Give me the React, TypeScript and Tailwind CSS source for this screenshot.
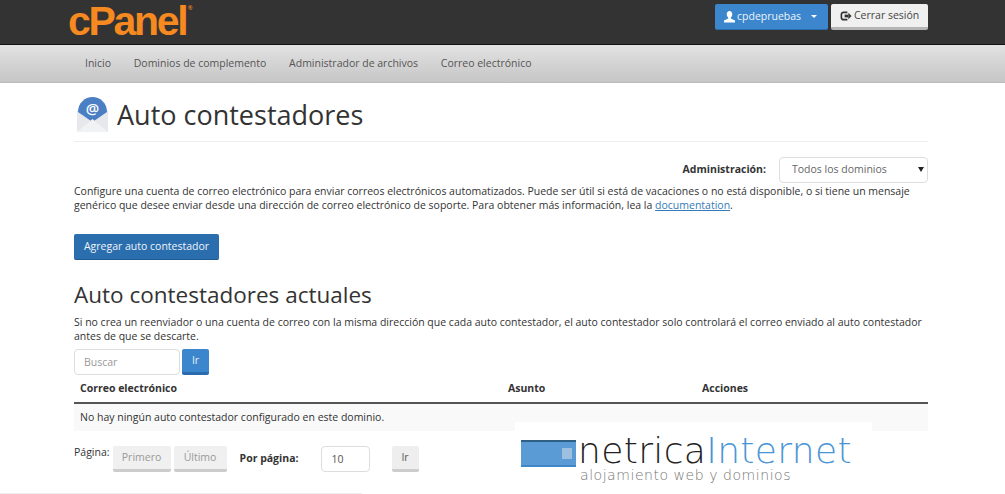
import React from 'react';

const btnGray = 'h-[26px] pt-[1px] flex items-center justify-center text-[10.5px] text-[#999] bg-[#f0f0f0] border-b-[3px] border-[#ccc] rounded-[2px]';

const MailIcon = () => (
  <svg width="31" height="36" viewBox="0 0 31 36" className="shrink-0">
    <path d="M0 13 L15.5 24 L31 13 V35 H0 Z" fill="#e6e8eb" />
    <path d="M1 15 C1 6 8 0 15.5 0 C23 0 30 6 30 15 L15.5 25 Z" fill="#4a7fc4" />
    <path d="M0 35 L15.5 22 L31 35 Z" fill="#f1f2f4" />
    <text x="15.5" y="17" textAnchor="middle" fontSize="15" fontWeight="600" fill="#fff" fontFamily="'Open Sans', sans-serif">@</text>
  </svg>
);

export default function App() {
  return (
    <div className="relative h-[494px] w-[1005px] overflow-hidden bg-white font-['Open_Sans',sans-serif] text-[#333]">
      {/* barra superior */}
      <header className="h-[45px] bg-[#333] border-b border-[#111] flex justify-between pl-[68px] pr-[77px]">
        <div className="relative h-[44px] font-['Liberation_Sans',sans-serif] font-bold text-[41px] leading-[42px] tracking-[-2.3px] text-[#f6891f]">
          cPanel
          <span className="absolute right-[-6px] top-[4px] text-[6px] leading-[8px] tracking-normal">®</span>
        </div>
        <div className="flex gap-[3px] pt-[4px]">
          <div className="w-[113px] h-[26px] bg-[#3b86cc] border-b-[1px] border-[#2a6cad] rounded-[2px] flex items-center pl-[9px] text-[10.5px] text-[#eef4fa]">
            <svg width="11" height="12" viewBox="0 0 11 12" fill="#fff" className="mr-[2px]">
              <path d="M5.5 0C7.2 0 8.3 1.3 8.3 3.2 8.3 4.8 7.4 6 6.8 6.6V7.5L11 9.6V11.5H0V9.6L4.2 7.5V6.6C3.6 6 2.7 4.8 2.7 3.2 2.7 1.3 3.8 0 5.5 0Z" />
            </svg>
            cpdepruebas
            <span className="ml-[10px] w-0 h-0 border-x-[3px] border-x-transparent border-t-[3px] border-t-white" />
          </div>
          <div className="w-[97px] h-[26px] pt-[1px] bg-[#f0f0f0] border-b-[3px] border-[#b5b5b5] rounded-[2px] flex items-center pl-[9px] text-[10.5px] text-[#444]">
            <svg width="12" height="12" viewBox="0 0 13 12" className="mr-[2px]" fill="none" stroke="#333" strokeWidth="1.8">
              <path d="M8 2H4C2.5 2 1.5 3 1.5 4.5V7.5C1.5 9 2.5 10 4 10H8" />
              <path d="M5 6H9" strokeWidth="3" />
              <path d="M9 2.5L12.5 6L9 9.5Z" fill="#333" stroke="none" />
            </svg>
            Cerrar sesión
          </div>
        </div>
      </header>

      {/* navegacion */}
      <nav className="h-[38px] bg-gradient-to-b from-[#e2e2e2] to-[#c6c6c6] border-b border-[#bbb] pl-[85px] flex items-center gap-[22.7px] text-[10.5px] text-[#555]">
        <span>Inicio</span>
        <span>Dominios de complemento</span>
        <span>Administrador de archivos</span>
        <span>Correo electrónico</span>
      </nav>

      <main className="ml-[74px] w-[854px]">
        <div className="h-[59px] border-b border-[#eee] flex items-center pl-[3px] gap-[9px] pt-[5px]">
          <MailIcon />
          <h1 className="text-[27px] leading-[36px] text-[#333]">Auto contestadores</h1>
        </div>

        <div className="flex justify-end items-center mt-[15px] h-[26px]">
          <span className="text-[10.5px] font-bold mr-[13px]">Administración:</span>
          <div className="relative w-[149px] h-[26px] border border-[#ddd] rounded-[4px] pl-[12px] flex items-center text-[10.5px] text-[#666]">
            Todos los dominios
            <span className="absolute right-[3px] top-[9px] w-0 h-0 border-x-[3px] border-x-transparent border-t-[5px] border-t-[#222]" />
          </div>
        </div>

        <p className="mt-[1px] text-[10.5px] leading-[14px] text-[#333]">
          Configure una cuenta de correo electrónico para enviar correos electrónicos automatizados. Puede ser útil si está de vacaciones o no está disponible, o si tiene un mensaje genérico que desee enviar desde una dirección de correo electrónico de soporte. Para obtener más información, lea la <span className="text-[#337ab7] underline">documentation</span>.
        </p>

        <button className="mt-[22px] w-[145px] h-[26px] bg-[#2a6ead] border-b border-[#20578c] rounded-[2px] text-[10.5px] text-[#eef4fa] block">
          Agregar auto contestador
        </button>

        <h2 className="mt-[20px] text-[22.5px] leading-[30px] text-[#333]">Auto contestadores actuales</h2>

        <p className="mt-[5px] text-[10.5px] leading-[14px] w-[850px]">
          Si no crea un reenviador o una cuenta de correo con la misma dirección que cada auto contestador, el auto contestador solo controlará el correo enviado al auto contestador antes de que se descarte.
        </p>

        <div className="mt-[6px] flex gap-[2px]">
          <div className="w-[106px] h-[26px] pt-[1px] border border-[#ddd] rounded-[4px] pl-[9px] flex items-center text-[10.5px] text-[#999]">Buscar</div>
          <div className="w-[27px] h-[26px] pt-[1px] bg-[#3b86cc] border-b-[3px] border-[#2a6cad] rounded-[2px] flex items-center justify-center text-[10.5px] text-[#e8f0f8]">Ir</div>
        </div>

        <div className="h-[27px] border-b-2 border-[#555] grid grid-cols-[428px_194px_1fr] pl-[6px] items-center text-[10.5px] font-bold box-content">
          <span>Correo electrónico</span>
          <span>Asunto</span>
          <span>Acciones</span>
        </div>
        <div className="h-[27px] bg-[#f9f9f9] pl-[6px] flex items-center text-[10.5px]">
          No hay ningún auto contestador configurado en este dominio.
        </div>

        <div className="mt-[15px] flex items-start text-[10.5px]">
          <span className="mt-[-2px] mr-[3px] leading-[17px]">Página:</span>
          <div className={`${btnGray} w-[58px] mr-[3px]`}>Primero</div>
          <div className={`${btnGray} w-[53px]`}>Último</div>
          <span className="ml-[13px] font-bold leading-[24px]">Por página:</span>
          <div className="ml-[22px] w-[49px] h-[26px] pt-[1px] border border-[#ddd] rounded-[4px] pl-[10px] flex items-center text-[#555]">10</div>
          <div className="ml-[22px] w-[27px] h-[26px] pt-[1px] bg-[#eee] border-b-[3px] border-[#ccc] rounded-[2px] flex items-center justify-center text-[#555]">Ir</div>
        </div>
      </main>

      {/* marca de agua */}
      <div className="absolute left-[515px] top-[422px] w-[357px] h-[72px] bg-white">
        <div className="absolute left-[6px] top-[18px] w-[55px] h-[27px] bg-[#5b9bd5] border-t-2 border-t-[#2f5f85] border-b-2 border-b-[#3f88c8]">
          <div className="absolute right-[4px] top-[6px] w-[10px] h-[11px] bg-[#9dc0e0]" />
        </div>
        <div className="absolute left-[63px] top-[6px] font-['DejaVu_Sans',sans-serif] font-extralight text-[36px] leading-[46px] tracking-[0.35px] whitespace-nowrap">
          <span className="text-[#222]">netrica</span><span className="text-[#4a95d6]">Internet</span>
        </div>
        <div className="absolute left-[65px] top-[44px] font-['DejaVu_Sans',sans-serif] font-extralight text-[14px] leading-[18px] tracking-[0.55px] text-[#777] whitespace-nowrap">
          alojamiento web y dominios
        </div>
      </div>
      <div className="absolute left-0 bottom-0 w-[362px] h-px bg-[#eee]" />
    </div>
  );
}
